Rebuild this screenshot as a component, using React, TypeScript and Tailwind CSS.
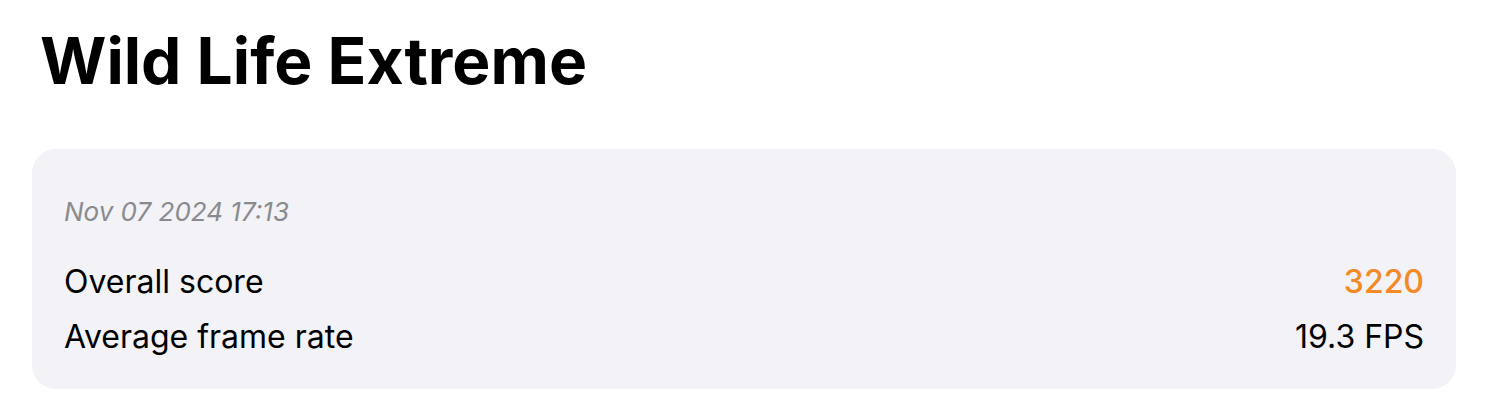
const rows = [
  { label: 'Overall score', value: '3220', accent: true },
  { label: 'Average frame rate', value: '19.3 FPS', accent: false },
];

export default function App() {
  return (
    <div className="min-h-[411px] bg-white px-8 font-['Inter',sans-serif] text-black">
      <h1 className="pt-[22px] pl-[8px] text-[64px] leading-[78px] font-bold">Wild Life Extreme</h1>
      <div className="mt-[49px] rounded-[24px] bg-[#f2f2f7] px-8 pt-[47px] pb-[25px]">
        <p className="text-[26px] leading-[32px] italic text-[#8a8a8e]">Nov 07 2024 17:13</p>
        <div className="mt-[26px] flex flex-col">
          {rows.map((r) => (
            <div key={r.label} className="flex items-center justify-between text-[32px] leading-[55px]">
              <span>{r.label}</span>
              <span className={r.accent ? 'font-medium text-[#f28a26]' : ''}>{r.value}</span>
            </div>
          ))}
        </div>
      </div>
    </div>
  );
}
